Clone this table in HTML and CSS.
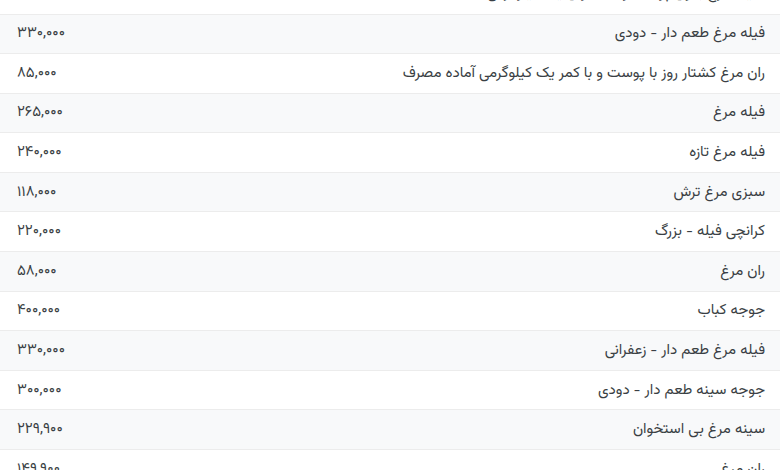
FILE: index.html
```html
<!DOCTYPE html>
<html lang="fa" dir="rtl">
<head>
<meta charset="utf-8">
<link rel="stylesheet" href="styles.css">
</head>
<body>
<div class="wrap">
<table class="prices">
<tbody>
<tr><td class="name">سینه مرغ بدون پوست و استخوان یک کیلوگرمی</td><td class="price">۲۵۰,۰۰۰</td></tr>
<tr class="alt"><td class="name">فیله مرغ طعم دار - دودی</td><td class="price">۳۳۰,۰۰۰</td></tr>
<tr><td class="name">ران مرغ کشتار روز با پوست و با کمر یک کیلوگرمی آماده مصرف</td><td class="price">۸۵,۰۰۰</td></tr>
<tr class="alt"><td class="name">فیله مرغ</td><td class="price">۲۶۵,۰۰۰</td></tr>
<tr><td class="name">فیله مرغ تازه</td><td class="price">۲۴۰,۰۰۰</td></tr>
<tr class="alt"><td class="name">سبزی مرغ ترش</td><td class="price">۱۱۸,۰۰۰</td></tr>
<tr><td class="name">کرانچی فیله - بزرگ</td><td class="price">۲۲۰,۰۰۰</td></tr>
<tr class="alt"><td class="name">ران مرغ</td><td class="price">۵۸,۰۰۰</td></tr>
<tr><td class="name">جوجه کباب</td><td class="price">۴۰۰,۰۰۰</td></tr>
<tr class="alt"><td class="name">فیله مرغ طعم دار - زعفرانی</td><td class="price">۳۳۰,۰۰۰</td></tr>
<tr><td class="name">جوجه سینه طعم دار - دودی</td><td class="price">۳۰۰,۰۰۰</td></tr>
<tr class="alt"><td class="name">سینه مرغ بی استخوان</td><td class="price">۲۲۹,۹۰۰</td></tr>
<tr><td class="name">ران مرغ</td><td class="price">۱۴۹,۹۰۰</td></tr>
</tbody>
</table>
</div>
</body>
</html>
```

FILE: styles.css
```css
html, body {
  margin: 0;
  padding: 0;
  background: #ffffff;
  overflow: hidden;
}
body {
  font-family: "Vazirmatn", "Noto Sans Arabic", "DejaVu Sans", sans-serif;
  font-size: 15px;
  color: #3a3f44;
}
.wrap {
  margin-top: -25.6px;
}
.prices {
  width: 100%;
  border-collapse: collapse;
}
.prices tr {
  height: 39.6px;
  border-bottom: 1px solid #ececec;
}
.prices tr.alt {
  background: #f8f9fa;
}
.prices td {
  padding: 0 15px;
  vertical-align: middle;
  white-space: nowrap;
}
.prices td.name {
  text-align: right;
}
.prices td.price {
  text-align: left;
  padding-left: 17px;
  width: 1%;
}
```
